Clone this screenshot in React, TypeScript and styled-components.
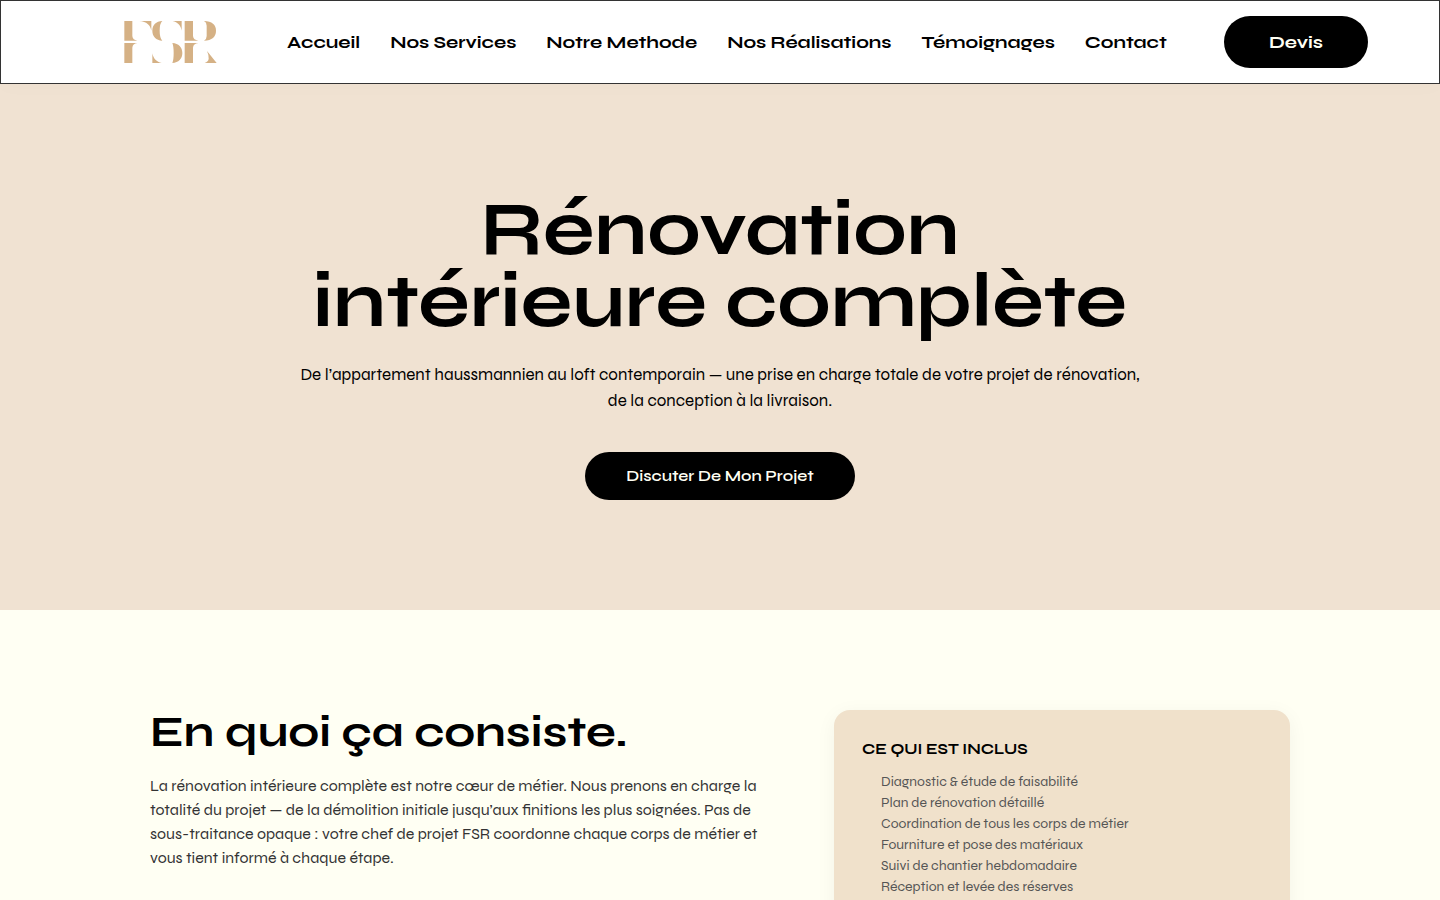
import React from 'react';
import styled, { createGlobalStyle } from 'styled-components';

const display = 'Syne, "DejaVu Sans", sans-serif';
const body = 'Syne, Inter, sans-serif';

const GlobalStyle = createGlobalStyle`
  * {
    box-sizing: border-box;
  }
  body {
    margin: 0;
    background: #fffff3;
    color: #000;
    font-family: ${body};
  }
  h1, h2, h3, p, ul {
    margin: 0;
    padding: 0;
  }
`;

const Header = styled.header`
  position: relative;
  display: flex;
  align-items: center;
  min-height: 84px;
  padding: 0 71px 0 123px;
  background: #fff;
  border: 1px solid #333;
  box-shadow: 0 2px 20px rgba(0, 0, 0, 0.02);
`;

const LogoLink = styled.a`
  display: flex;
  margin-right: 70px;
`;

const Nav = styled.nav`
  display: flex;
  gap: 30px;
`;

const NavLink = styled.a`
  color: #000;
  font: 700 18px/24px ${display};
  text-decoration: none;
  white-space: nowrap;
`;

const Pill = styled.button<{ $large?: boolean }>`
  min-width: ${(p) => (p.$large ? 270 : 144)}px;
  height: ${(p) => (p.$large ? 48 : 52)}px;
  padding: 0 40px;
  border: 0;
  border-radius: 26px;
  background: #000;
  color: #fffff3;
  font: ${(p) => (p.$large ? '600 16px' : '700 18px')}/24px ${display};
  white-space: nowrap;
  cursor: pointer;
`;

const HeaderAction = styled.div`
  margin-left: auto;
`;

const Hero = styled.section`
  display: flex;
  flex-direction: column;
  align-items: center;
  padding: 110px 24px;
  background: #f0e2d2;
  text-align: center;
`;

const HeroTitle = styled.h1`
  max-width: 900px;
  font: 700 76px/72px ${display};
`;

const HeroText = styled.p`
  max-width: 860px;
  margin: 24px 0 38px;
  font-size: 17px;
  line-height: 26px;
`;

const Details = styled.section`
  display: grid;
  grid-template-columns: minmax(0, 1fr) 40%;
  align-items: start;
  gap: 60px;
  max-width: 1188px;
  margin: 0 auto;
  padding: 100px 24px;
`;

const DetailsTitle = styled.h2`
  margin-bottom: 20px;
  font: 700 44px/44px ${display};
`;

const DetailsText = styled.p`
  color: #333;
  font-size: 16px;
  line-height: 24px;
`;

const Card = styled.aside`
  padding: 28px;
  border-radius: 16px;
  background: #f0e1cb;
  box-shadow: 0 4px 20px rgba(0, 0, 0, 0.05);
`;

const CardTitle = styled.h3`
  margin-bottom: 11px;
  font: 700 15px/22px ${display};
  text-transform: uppercase;
`;

const CardList = styled.ul`
  padding-left: 19px;
  list-style: none;
  color: #555;
  font-size: 14px;
  line-height: 21px;
`;

const links = ['Accueil', 'Nos Services', 'Notre Methode', 'Nos Réalisations', 'Témoignages', 'Contact'];

const included = [
  'Diagnostic & étude de faisabilité',
  'Plan de rénovation détaillé',
  'Coordination de tous les corps de métier',
  'Fourniture et pose des matériaux',
  'Suivi de chantier hebdomadaire',
  'Réception et levée des réserves',
];

function Logo() {
  return (
    <svg width="93" height="42" viewBox="42 33 279 126" fill="#d5b185" aria-hidden="true">
      <path d="M43 33H67V78Q68 90 82 92H43Z" />
      <path d="M88 33H124V62C121 45 110 35 88 33Z" />
      <path d="M43 99H82Q68 101 67 113V159H43Z" />
      <path d="M157 33Q149 40 149 62T157 92C138 91 127 79 127 62S138 34 157 33Z" />
      <path d="M188 33H215V62C212 46 203 37 188 33Z" />
      <path d="M187 99C206 100 217 112 217 129S206 158 187 159Q191 150 191 129T187 99Z" />
      <path d="M127 130C130 146 140 156 155 159H127Z" />
      <path d="M224 33H249V78Q250 90 265 92H224Z" />
      <path d="M282 33C306 34 318 44 318 62S306 91 282 92Q290 88 290 78V47Q290 37 282 33Z" />
      <path d="M224 99H265Q250 101 249 113V159H224Z" />
      <path d="M291 123L320 159H284Q295 155 296 146Q297 136 291 123Z" />
    </svg>
  );
}

export default function App() {
  return (
    <>
      <GlobalStyle />
      <Header>
        <LogoLink href="#" aria-label="FSR">
          <Logo />
        </LogoLink>
        <Nav>
          {links.map((label) => (
            <NavLink key={label} href="#">
              {label}
            </NavLink>
          ))}
        </Nav>
        <HeaderAction>
          <Pill type="button">Devis</Pill>
        </HeaderAction>
      </Header>
      <main>
        <Hero>
          <HeroTitle>
            Rénovation
            <br />
            intérieure complète
          </HeroTitle>
          <HeroText>
            De l’appartement haussmannien au loft contemporain — une prise en charge totale de votre projet de
            rénovation, de la conception à la livraison.
          </HeroText>
          <Pill type="button" $large>
            Discuter De Mon Projet
          </Pill>
        </Hero>
        <Details>
          <div>
            <DetailsTitle>En quoi ça consiste.</DetailsTitle>
            <DetailsText>
              La rénovation intérieure complète est notre cœur de métier. Nous prenons en charge la totalité du
              projet — de la démolition initiale jusqu’aux finitions les plus soignées. Pas de sous-traitance
              opaque : votre chef de projet FSR coordonne chaque corps de métier et vous tient informé à chaque
              étape.
            </DetailsText>
          </div>
          <Card>
            <CardTitle>Ce qui est inclus</CardTitle>
            <CardList>
              {included.map((item) => (
                <li key={item}>{item}</li>
              ))}
            </CardList>
          </Card>
        </Details>
      </main>
    </>
  );
}
